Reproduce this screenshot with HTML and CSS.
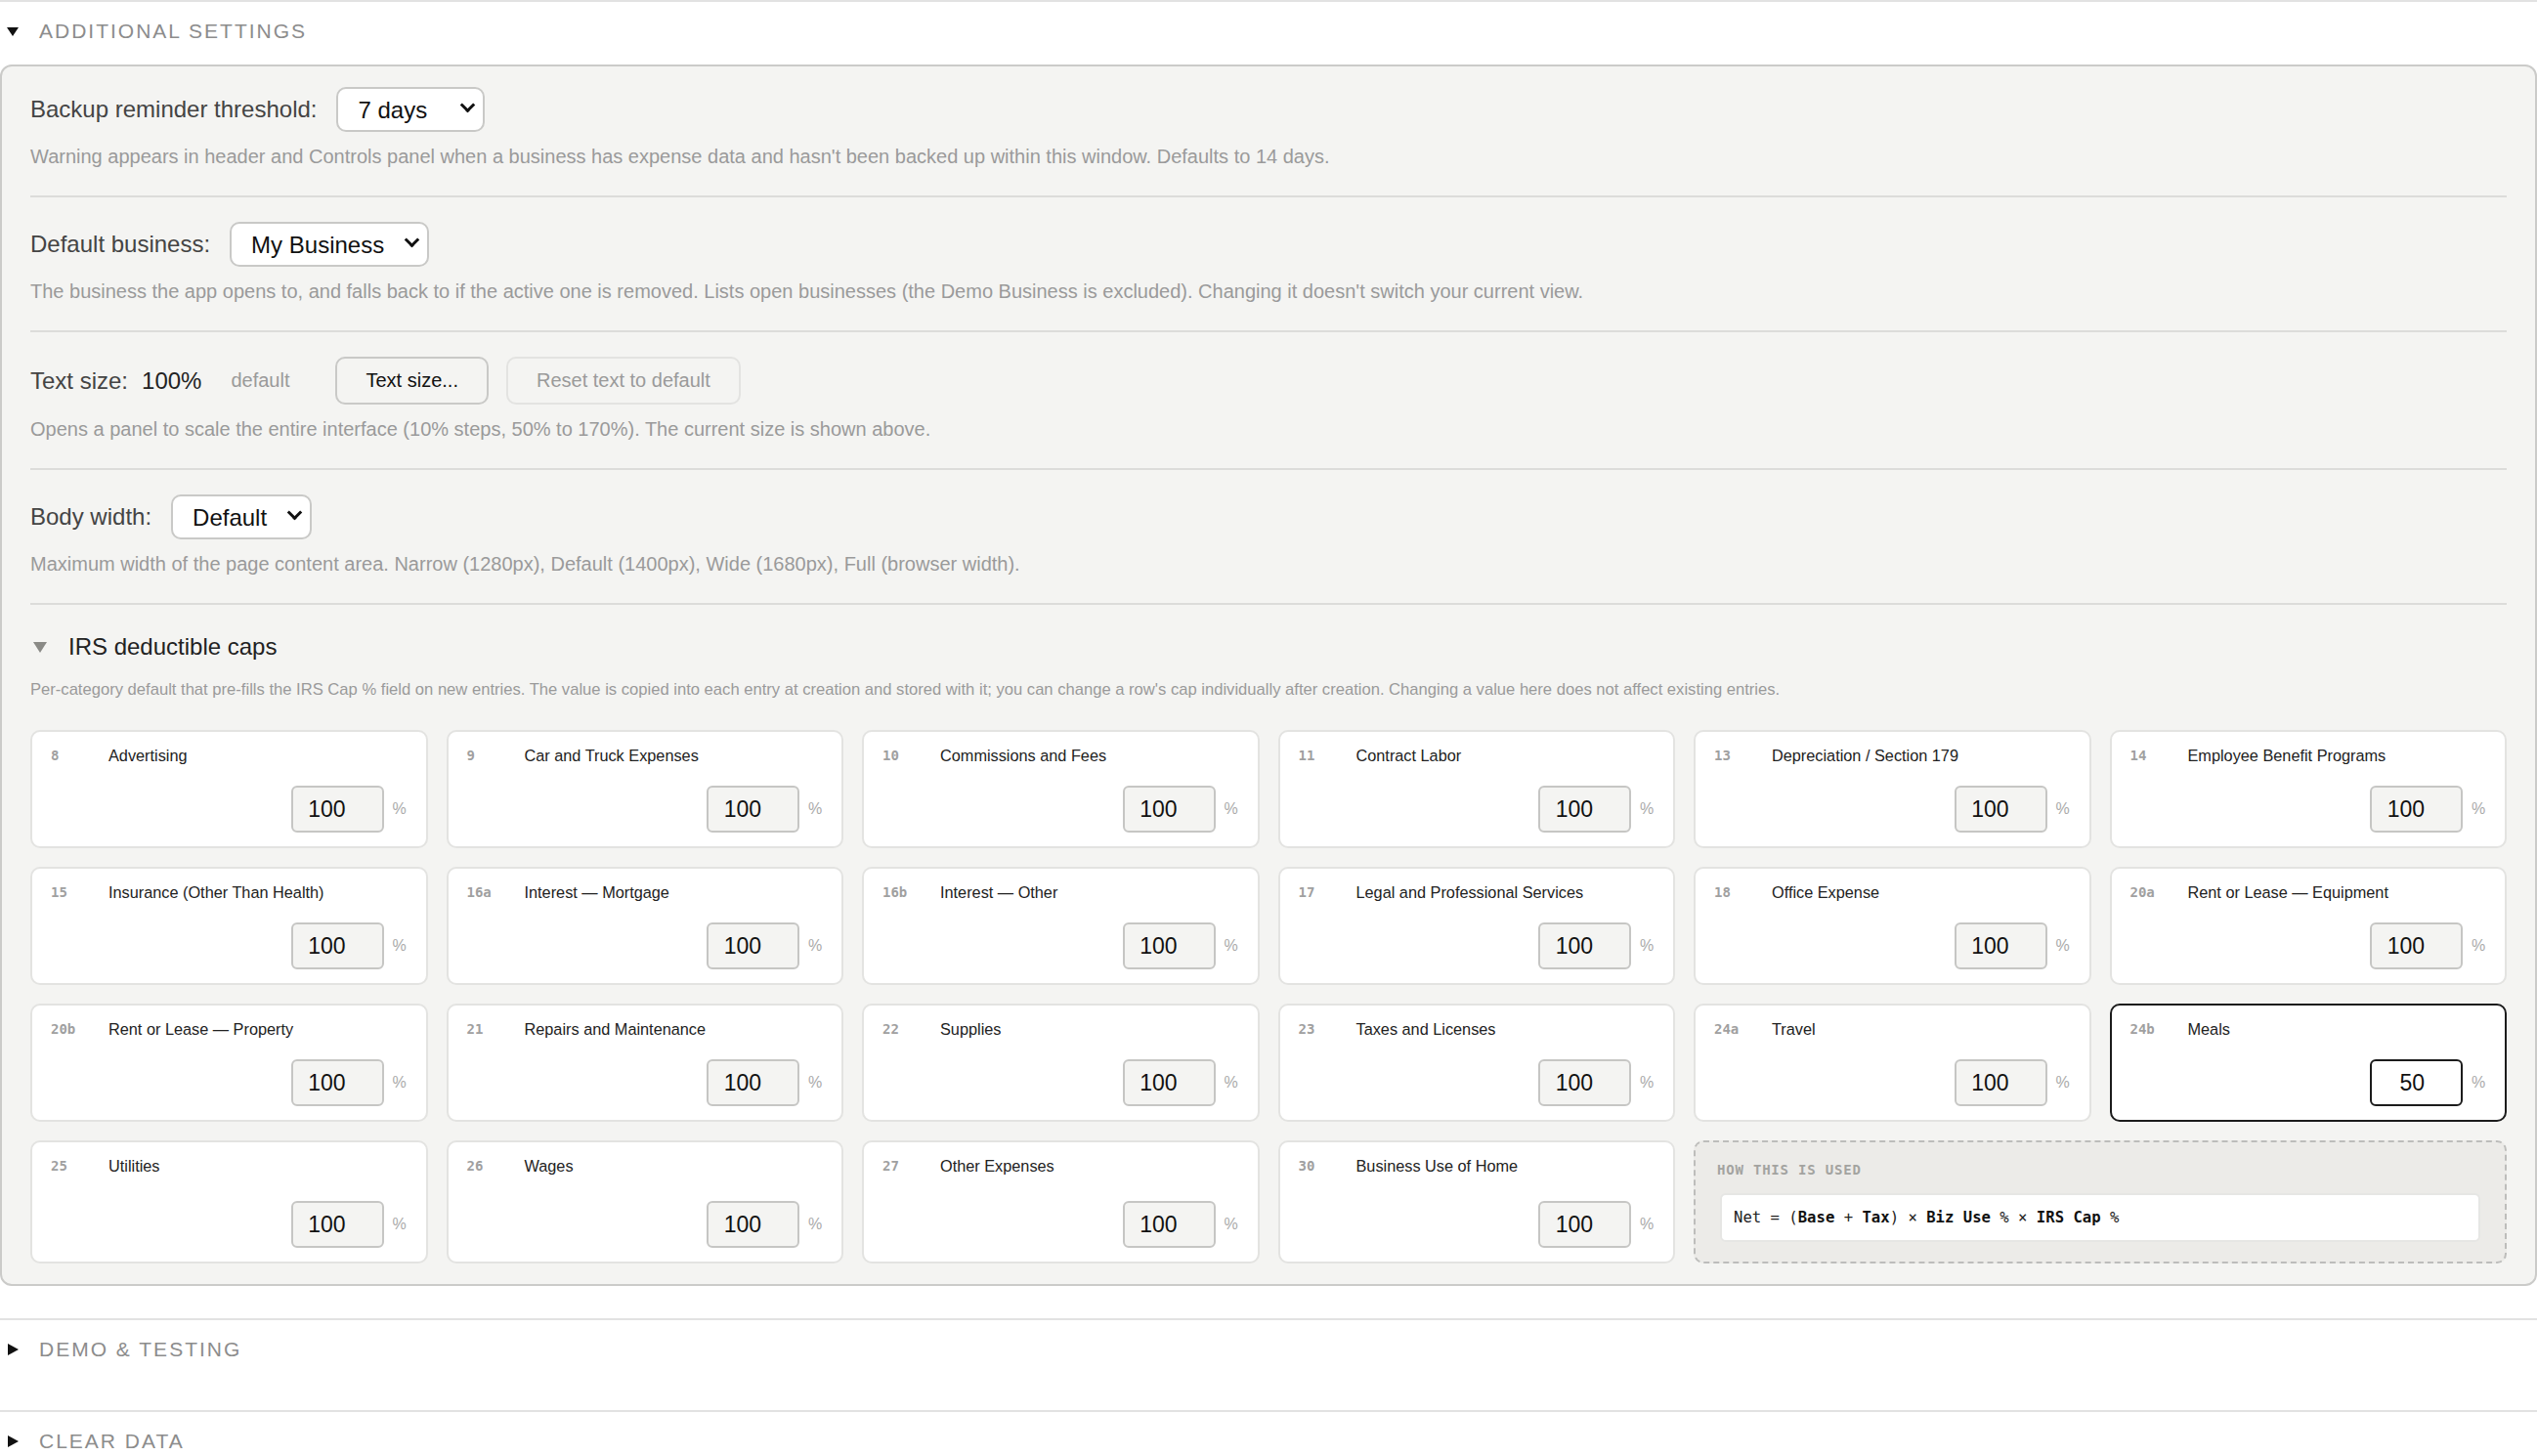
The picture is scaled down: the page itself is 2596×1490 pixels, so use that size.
FILE: index.html
```html
<!doctype html>
<html lang="en">

<head>
  <meta charset="utf-8">
  <title>Settings</title>
  <link rel="stylesheet" href="styles.css">
</head>

<body>
  <details class="group" open>
    <summary class="group-head"><span class="caret caret-open"></span><span class="group-title">Additional settings</span></summary>
    <div class="panel">
      <div class="setting">
        <div class="setting-row">
          <label class="setting-label" for="backup-days">Backup reminder threshold:</label>
          <span class="select-wrap">
            <select id="backup-days" class="select select-days">
              <option>3 days</option>
              <option selected>7 days</option>
              <option>14 days</option>
              <option>30 days</option>
            </select>
          </span>
        </div>
        <p class="hint">Warning appears in header and Controls panel when a business has expense data and hasn't been backed up within this window. Defaults to 14 days.</p>
      </div>

      <div class="setting">
        <div class="setting-row">
          <label class="setting-label" for="default-biz">Default business:</label>
          <span class="select-wrap">
            <select id="default-biz" class="select select-biz">
              <option selected>My Business</option>
            </select>
          </span>
        </div>
        <p class="hint">The business the app opens to, and falls back to if the active one is removed. Lists open businesses (the Demo Business is excluded). Changing it doesn't switch your current view.</p>
      </div>

      <div class="setting">
        <div class="setting-row">
          <span class="setting-label">Text size:</span>
          <span class="text-size-value">100%</span>
          <span class="text-size-note">default</span>
          <button class="btn btn-text-size">Text size...</button>
          <button class="btn btn-reset" disabled>Reset text to default</button>
        </div>
        <p class="hint">Opens a panel to scale the entire interface (10% steps, 50% to 170%). The current size is shown above.</p>
      </div>

      <div class="setting">
        <div class="setting-row">
          <label class="setting-label" for="body-width">Body width:</label>
          <span class="select-wrap">
            <select id="body-width" class="select select-width">
              <option>Narrow</option>
              <option selected>Default</option>
              <option>Wide</option>
              <option>Full</option>
            </select>
          </span>
        </div>
        <p class="hint">Maximum width of the page content area. Narrow (1280px), Default (1400px), Wide (1680px), Full (browser width).</p>
      </div>

      <details class="caps" open>
        <summary class="caps-head"><span class="caps-caret"></span>IRS deductible caps</summary>
        <p class="caps-desc">Per-category default that pre-fills the IRS Cap % field on new entries. The value is copied into each entry at creation and stored with it; you can change a row's cap individually after creation. Changing a value here does not affect existing entries.</p>

        <div class="caps-grid">
          <div class="cap-card">
            <div class="cap-top"><span class="cap-line">8</span><span class="cap-name">Advertising</span></div>
            <div class="cap-foot"><input class="cap-input" type="text" value="100"><span class="cap-pct">%</span></div>
          </div>
          <div class="cap-card">
            <div class="cap-top"><span class="cap-line">9</span><span class="cap-name">Car and Truck Expenses</span></div>
            <div class="cap-foot"><input class="cap-input" type="text" value="100"><span class="cap-pct">%</span></div>
          </div>
          <div class="cap-card">
            <div class="cap-top"><span class="cap-line">10</span><span class="cap-name">Commissions and Fees</span></div>
            <div class="cap-foot"><input class="cap-input" type="text" value="100"><span class="cap-pct">%</span></div>
          </div>
          <div class="cap-card">
            <div class="cap-top"><span class="cap-line">11</span><span class="cap-name">Contract Labor</span></div>
            <div class="cap-foot"><input class="cap-input" type="text" value="100"><span class="cap-pct">%</span></div>
          </div>
          <div class="cap-card">
            <div class="cap-top"><span class="cap-line">13</span><span class="cap-name">Depreciation / Section 179</span></div>
            <div class="cap-foot"><input class="cap-input" type="text" value="100"><span class="cap-pct">%</span></div>
          </div>
          <div class="cap-card">
            <div class="cap-top"><span class="cap-line">14</span><span class="cap-name">Employee Benefit Programs</span></div>
            <div class="cap-foot"><input class="cap-input" type="text" value="100"><span class="cap-pct">%</span></div>
          </div>

          <div class="cap-card">
            <div class="cap-top"><span class="cap-line">15</span><span class="cap-name">Insurance (Other Than Health)</span></div>
            <div class="cap-foot"><input class="cap-input" type="text" value="100"><span class="cap-pct">%</span></div>
          </div>
          <div class="cap-card">
            <div class="cap-top"><span class="cap-line">16a</span><span class="cap-name">Interest — Mortgage</span></div>
            <div class="cap-foot"><input class="cap-input" type="text" value="100"><span class="cap-pct">%</span></div>
          </div>
          <div class="cap-card">
            <div class="cap-top"><span class="cap-line">16b</span><span class="cap-name">Interest — Other</span></div>
            <div class="cap-foot"><input class="cap-input" type="text" value="100"><span class="cap-pct">%</span></div>
          </div>
          <div class="cap-card">
            <div class="cap-top"><span class="cap-line">17</span><span class="cap-name">Legal and Professional Services</span></div>
            <div class="cap-foot"><input class="cap-input" type="text" value="100"><span class="cap-pct">%</span></div>
          </div>
          <div class="cap-card">
            <div class="cap-top"><span class="cap-line">18</span><span class="cap-name">Office Expense</span></div>
            <div class="cap-foot"><input class="cap-input" type="text" value="100"><span class="cap-pct">%</span></div>
          </div>
          <div class="cap-card">
            <div class="cap-top"><span class="cap-line">20a</span><span class="cap-name">Rent or Lease — Equipment</span></div>
            <div class="cap-foot"><input class="cap-input" type="text" value="100"><span class="cap-pct">%</span></div>
          </div>

          <div class="cap-card">
            <div class="cap-top"><span class="cap-line">20b</span><span class="cap-name">Rent or Lease — Property</span></div>
            <div class="cap-foot"><input class="cap-input" type="text" value="100"><span class="cap-pct">%</span></div>
          </div>
          <div class="cap-card">
            <div class="cap-top"><span class="cap-line">21</span><span class="cap-name">Repairs and Maintenance</span></div>
            <div class="cap-foot"><input class="cap-input" type="text" value="100"><span class="cap-pct">%</span></div>
          </div>
          <div class="cap-card">
            <div class="cap-top"><span class="cap-line">22</span><span class="cap-name">Supplies</span></div>
            <div class="cap-foot"><input class="cap-input" type="text" value="100"><span class="cap-pct">%</span></div>
          </div>
          <div class="cap-card">
            <div class="cap-top"><span class="cap-line">23</span><span class="cap-name">Taxes and Licenses</span></div>
            <div class="cap-foot"><input class="cap-input" type="text" value="100"><span class="cap-pct">%</span></div>
          </div>
          <div class="cap-card">
            <div class="cap-top"><span class="cap-line">24a</span><span class="cap-name">Travel</span></div>
            <div class="cap-foot"><input class="cap-input" type="text" value="100"><span class="cap-pct">%</span></div>
          </div>
          <div class="cap-card modified">
            <div class="cap-top"><span class="cap-line">24b</span><span class="cap-name">Meals</span></div>
            <div class="cap-foot"><input class="cap-input" type="text" value="50"><span class="cap-pct">%</span></div>
          </div>

          <div class="cap-card">
            <div class="cap-top"><span class="cap-line">25</span><span class="cap-name">Utilities</span></div>
            <div class="cap-foot"><input class="cap-input" type="text" value="100"><span class="cap-pct">%</span></div>
          </div>
          <div class="cap-card">
            <div class="cap-top"><span class="cap-line">26</span><span class="cap-name">Wages</span></div>
            <div class="cap-foot"><input class="cap-input" type="text" value="100"><span class="cap-pct">%</span></div>
          </div>
          <div class="cap-card">
            <div class="cap-top"><span class="cap-line">27</span><span class="cap-name">Other Expenses</span></div>
            <div class="cap-foot"><input class="cap-input" type="text" value="100"><span class="cap-pct">%</span></div>
          </div>
          <div class="cap-card">
            <div class="cap-top"><span class="cap-line">30</span><span class="cap-name">Business Use of Home</span></div>
            <div class="cap-foot"><input class="cap-input" type="text" value="100"><span class="cap-pct">%</span></div>
          </div>

          <div class="formula-box">
            <div class="formula-label">How this is used</div>
            <div class="formula">Net = (<b>Base</b> + <b>Tax</b>) × <b>Biz Use</b> % × <b>IRS Cap</b> %</div>
          </div>
        </div>
      </details>
    </div>
  </details>

  <details class="group">
    <summary class="group-head"><span class="caret caret-closed"></span><span class="group-title">Demo &amp; testing</span></summary>
  </details>

  <details class="group">
    <summary class="group-head"><span class="caret caret-closed"></span><span class="group-title">Clear data</span></summary>
  </details>
</body>

</html>
```

FILE: styles.css
```css
body {
  margin: 0;
  font-family: "Liberation Sans", Arial, sans-serif;
  color: #222;
  background: #fff;
}

/* collapsible top-level groups */
.group {
  border-top: 2px solid #e2e2e2;
  padding-bottom: 28px;
}

.group-head {
  display: flex;
  align-items: center;
  padding: 18px 0 22px;
  line-height: 24px;
  cursor: pointer;
  list-style: none;
}

.group-head::-webkit-details-marker {
  display: none;
}

.caret {
  width: 40px;
  height: 24px;
  position: relative;
  flex-shrink: 0;
}

.caret::before {
  content: "";
  position: absolute;
  left: 7px;
  top: 8px;
  width: 0;
  height: 0;
}

.caret-open::before {
  border-left: 6px solid transparent;
  border-right: 6px solid transparent;
  border-top: 9px solid #111;
}

.caret-closed::before {
  left: 8px;
  top: 6px;
  border-top: 6px solid transparent;
  border-bottom: 6px solid transparent;
  border-left: 11px solid #111;
}

.group-title {
  font-size: 21px;
  letter-spacing: 2px;
  text-transform: uppercase;
  color: #8c8c8c;
}

.panel {
  background: #f4f4f2;
  border: 2px solid #cbcbc9;
  border-radius: 12px;
  padding: 0 29px 21px;
  margin-bottom: 5px;
}

/* one setting block */
.setting {
  padding: 25px 0 28px;
  border-bottom: 2px solid #dcdcda;
}

.setting:first-child {
  padding-top: 21px;
}

.setting-row {
  display: flex;
  align-items: center;
  gap: 20px;
  min-height: 46px;
}

.setting-label {
  font-size: 24px;
  color: #444;
}

.select-wrap {
  position: relative;
  display: inline-flex;
}

/* bold chevron drawn over the right end of the select */
.select-wrap::after {
  content: "";
  position: absolute;
  right: 12px;
  top: 13px;
  width: 8px;
  height: 8px;
  border-right: 3.5px solid #111;
  border-bottom: 3.5px solid #111;
  transform: rotate(45deg);
  pointer-events: none;
}

.select {
  appearance: none;
  -webkit-appearance: none;
  font-family: inherit;
  font-size: 24px;
  color: #111;
  background: #fff;
  border: 2px solid #c9c9c7;
  border-radius: 10px;
  height: 46px;
  padding: 0 30px 0 20px;
}

.select-days {
  width: 152px;
}

.select-biz {
  width: 204px;
}

.select-width {
  width: 144px;
}

.hint {
  margin: 13px 0 0;
  font-size: 20px;
  line-height: 24px;
  color: #9a9a9a;
}

.text-size-value {
  font-size: 24px;
  color: #222;
  margin-left: -6px;
}

.text-size-note {
  font-size: 20px;
  color: #9a9a9a;
  margin-left: 10px;
}

.btn {
  font-family: inherit;
  font-size: 20px;
  height: 49px;
  padding: 0 29px;
  border-radius: 10px;
  background: #f4f4f2;
  cursor: pointer;
}

.btn-text-size {
  margin-left: 27px;
  border: 2px solid #c9c9c7;
  color: #111;
}

.btn-reset {
  margin-left: -2px;
  border: 2px solid #e3e3e1;
  color: #9a9a9a;
  cursor: default;
}

/* IRS caps */
.caps-head {
  display: flex;
  align-items: center;
  padding-top: 31px;
  font-size: 24px;
  line-height: 24px;
  color: #222;
  list-style: none;
  cursor: pointer;
}

.caps-head::-webkit-details-marker {
  display: none;
}

.caps-caret {
  width: 39px;
  height: 24px;
  position: relative;
}

.caps-caret::before {
  content: "";
  position: absolute;
  left: 3px;
  top: 7px;
  border-left: 7px solid transparent;
  border-right: 7px solid transparent;
  border-top: 11px solid #8a8a86;
}

.caps-desc {
  margin: 22px 0 31px;
  font-size: 16.6px;
  line-height: 20px;
  color: #9a9a9a;
}

.caps-grid {
  display: grid;
  grid-template-columns: repeat(6, 1fr);
  gap: 19px;
}

.cap-card {
  display: flex;
  flex-direction: column;
  background: #fff;
  border: 2px solid #e3e3e1;
  border-radius: 10px;
  padding: 14px 19px;
}

.cap-card.modified {
  border-color: #1c1c1c;
}

.cap-top {
  display: flex;
  align-items: center;
  line-height: 20px;
}

.cap-line {
  width: 59px;
  flex-shrink: 0;
  font-family: "DejaVu Sans Mono", monospace;
  font-weight: bold;
  font-size: 14px;
  color: #a0a0a0;
}

.cap-name {
  font-size: 16.3px;
  color: #222;
}

.cap-foot {
  margin-top: auto;
  padding-top: 21px;
  display: flex;
  align-items: center;
  justify-content: flex-end;
  gap: 9px;
}

.cap-input {
  width: 95px;
  height: 48px;
  box-sizing: border-box;
  border: 2px solid #c6c6c4;
  border-radius: 6px;
  background: #f4f4f2;
  font-family: inherit;
  font-size: 23px;
  color: #111;
  text-align: right;
  padding: 0 37px 0 8px;
}

.modified .cap-input {
  border-color: #1c1c1c;
  background: #fff;
}

.cap-pct {
  font-size: 16px;
  color: #aaa;
  width: 15px;
}

.formula-box {
  grid-column: span 2;
  background: #ecebe8;
  border: 2px dashed #bdbdbb;
  border-radius: 10px;
  padding: 20px 25px 20px 22px;
}

.formula-label {
  font-family: "DejaVu Sans Mono", monospace;
  font-weight: bold;
  font-size: 14px;
  line-height: 16px;
  letter-spacing: 0.8px;
  text-transform: uppercase;
  color: #a3a3a0;
}

.formula {
  margin: 16px 0 0 3px;
  height: 50px;
  box-sizing: border-box;
  display: flex;
  align-items: center;
  white-space: pre;
  padding: 0 12px;
  background: #fff;
  border: 2px solid #e6e6e4;
  border-radius: 6px;
  font-family: "DejaVu Sans Mono", monospace;
  font-size: 15.6px;
  color: #222;
}

.formula b {
  color: #111;
}
```
